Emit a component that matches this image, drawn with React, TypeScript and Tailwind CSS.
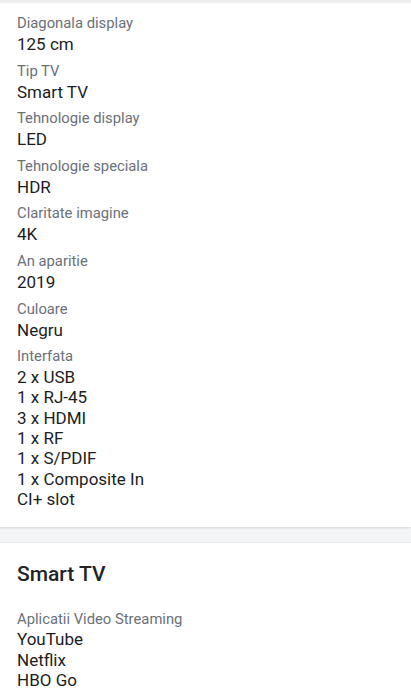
const specs: Array<{ label: string; values: string[] }> = [
  { label: 'Diagonala display', values: ['125 cm'] },
  { label: 'Tip TV', values: ['Smart TV'] },
  { label: 'Tehnologie display', values: ['LED'] },
  { label: 'Tehnologie speciala', values: ['HDR'] },
  { label: 'Claritate imagine', values: ['4K'] },
  { label: 'An aparitie', values: ['2019'] },
  { label: 'Culoare', values: ['Negru'] },
  {
    label: 'Interfata',
    values: ['2 x USB', '1 x RJ-45', '3 x HDMI', '1 x RF', '1 x S/PDIF', '1 x Composite In', 'CI+ slot'],
  },
]

function Spec({ label, values }: { label: string; values: string[] }) {
  return (
    <div className="flex flex-col">
      <span className="text-[14.8px] leading-[22px] text-[#6b7079]">{label}</span>
      {values.map(v => (
        <span key={v} className="text-[17px] leading-[20.3px] text-[#1c1d1f]">
          {v}
        </span>
      ))}
    </div>
  )
}

export default function App() {
  return (
    <div className="w-[411px] h-[699px] overflow-hidden bg-[#f2f4f6] font-['Roboto',sans-serif]">
      {/* spec card */}
      <div className="bg-white border-t-[3px] border-[#eeeff0] shadow-[0_1px_2px_rgba(0,0,0,0.12)] pl-[17px] pt-[9px] pb-[18px] flex flex-col gap-[5.3px]">
        {specs.map(s => (
          <Spec key={s.label} label={s.label} values={s.values} />
        ))}
      </div>

      {/* smart tv card */}
      <div className="mt-[16px] bg-white pl-[17px] pt-[19px] h-[200px] shadow-[0_-1px_1px_rgba(0,0,0,0.04)]">
        <h2 className="text-[21px] leading-[24px] font-medium text-[#232426]">Smart TV</h2>
        <div className="mt-[23px] flex flex-col">
          <span className="text-[14.8px] leading-[20px] text-[#6b7079]">Aplicatii Video Streaming</span>
          {['YouTube', 'Netflix', 'HBO Go'].map(v => (
            <span key={v} className="text-[17px] leading-[20.5px] text-[#1c1d1f]">
              {v}
            </span>
          ))}
        </div>
      </div>
    </div>
  )
}
